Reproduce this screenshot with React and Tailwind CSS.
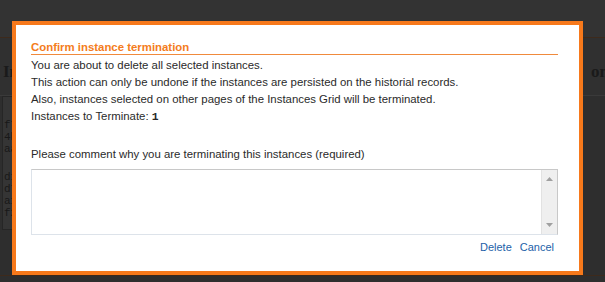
export default function App() {
    const font = { fontFamily: '"Liberation Sans", Arial, sans-serif' };

    return (
        <div className="relative w-[605px] h-[282px] overflow-hidden bg-[#2e2e2e]" style={font}>
            {/* Dimmed page behind the dialog */}
            <div className="h-[38px] bg-[#333333] border-b border-[#3d2a1c]" />
            <div className="flex justify-between items-start pt-[24px] h-[58px] bg-[#303030] border-b border-[#3a3a3a] text-[#1a1a1a] text-[17px] leading-[20px] font-bold" style={{ fontFamily: '"Liberation Serif", serif' }}>
                <span className="ml-[3px]">In</span>
                <span className="-mr-[4px]">on</span>
            </div>
            <div className="flex">
                <div className="w-[40px] ml-[2px] h-[134px] bg-[#353535] border border-[#262626] pl-[1px] pt-[22px] text-[11px] leading-[12px] text-[#181818]" style={{ fontFamily: '"Liberation Mono", monospace' }}>
                    <div>f7</div>
                    <div>4b</div>
                    <div>aa</div>
                    <div className="h-[16px]" />
                    <div>d1</div>
                    <div>d7</div>
                    <div>a1</div>
                    <div>f2</div>
                </div>
            </div>
            <div className="absolute left-0 right-0 bottom-[6px] h-[1px] bg-[#3d2a1c]" />

            {/* Dialog */}
            <div className="absolute left-[12px] top-[21px] w-[571px] h-[254px] border-4 border-[#f7791b] bg-white px-[15px] pt-[16px] text-[11.4px] text-[#2a2a2a]">
                <div className="w-[527px] border-b border-[#f08a3c] text-[#f47c20] font-bold leading-[13px]">
                    Confirm instance termination
                </div>
                <div className="mt-[2px] leading-[17px]">
                    <div>You are about to delete all selected instances.</div>
                    <div>This action can only be undone if the instances are persisted on the historial records.</div>
                    <div>Also, instances selected on other pages of the Instances Grid will be terminated.</div>
                    <div>
                        Instances to Terminate: <span className="font-bold" style={{ fontFamily: '"Liberation Mono", monospace' }}>1</span>
                    </div>
                </div>
                <div className="mt-[21px] leading-[14px]">Please comment why you are terminating this instances (required)</div>
                <div className="mt-[8px] w-[527px] h-[66px] flex border border-[#c8c8c8] border-b-[#dde3ea] border-l-[#dde3ea]">
                    <textarea className="flex-1 resize-none outline-none" />
                    <div className="w-[16px] bg-[#efefef] border-l border-[#e2e2e2] flex flex-col justify-between items-center py-[7px]">
                        <svg width="7" height="4" viewBox="0 0 7 4"><path d="M0 4 L3.5 0 L7 4 Z" fill="#a0a0a0" /></svg>
                        <svg width="7" height="4" viewBox="0 0 7 4"><path d="M0 0 L3.5 4 L7 0 Z" fill="#a0a0a0" /></svg>
                    </div>
                </div>
                <div className="w-[527px] mt-[5px] flex justify-end gap-[8px] pr-[4px] text-[#1d5fa8] text-[11px] leading-[14px]">
                    <span>Delete</span>
                    <span>Cancel</span>
                </div>
            </div>
        </div>
    );
}
